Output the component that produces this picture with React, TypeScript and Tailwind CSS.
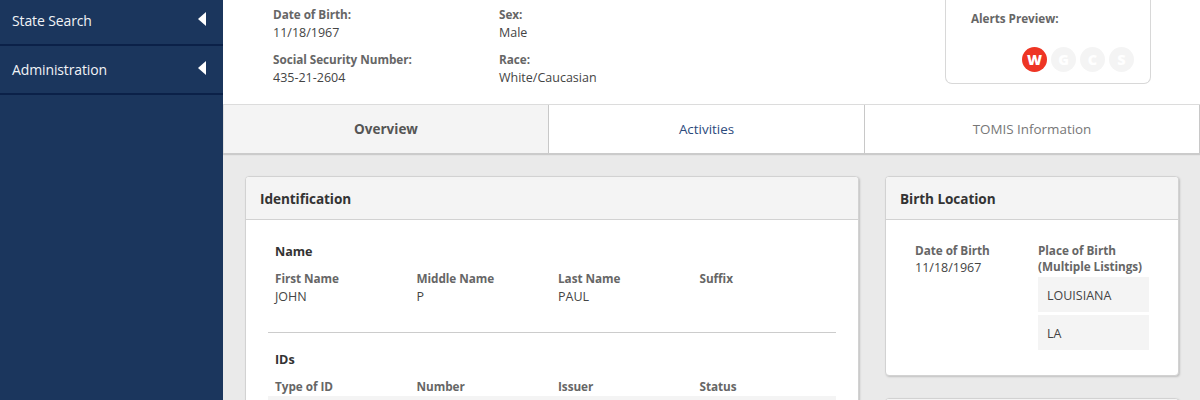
import type { ReactNode } from "react";

function NavItem({ label }: { label: string }) {
  return (
    <div className="flex h-[49px] items-center justify-between border-b-2 border-[#0b2148] pr-[17px] pl-3 text-[14px] leading-5 tracking-[-0.12px] text-[#f1f3f6]">
      <span className="pt-px">{label}</span>
      <svg className="mb-[3px] h-[14px] w-[8px]" viewBox="0 0 8 14" fill="#fff">
        <path d="M8 0v14L0 7z" />
      </svg>
    </div>
  );
}

function Field({ label, value }: { label: string; value?: string }) {
  return (
    <div className="leading-[17px] whitespace-nowrap">
      <div className="text-[11.75px] font-bold tracking-[-0.05px] text-[#666]">{label}</div>
      <div className="pt-px text-[12.5px] leading-[17px] text-[#444]">{value}</div>
    </div>
  );
}

function Alert({ letter, active = false }: { letter: string; active?: boolean }) {
  return (
    <span
      className={
        active
          ? "flex size-[25px] items-center justify-center rounded-full bg-[#ee3524] pt-px text-[14.5px] leading-none font-extrabold text-white"
          : "flex size-[25px] items-center justify-center rounded-full bg-[#f4f4f4] pt-px text-[14.5px] leading-none font-extrabold text-white"
      }
    >
      {letter}
    </span>
  );
}

function Card({ title, children }: { title: string; children?: ReactNode }) {
  return (
    <section className="rounded-[4px] border border-[#d2d2d2] bg-white shadow-[1px_1px_2px_#c0c0c0]">
      <h2 className="flex h-[43px] items-center rounded-t-[3px] border-b border-[#d2d2d2] bg-[#f4f4f4] pt-px pl-[14px] text-[13.6px] leading-[18px] font-bold tracking-[-0.07px] text-[#333]">
        {title}
      </h2>
      {children}
    </section>
  );
}

export default function App() {
  return (
    <div className="flex h-[400px] w-[1200px] overflow-hidden bg-[#eaeaea] font-['Open_Sans',sans-serif]">
      <nav className="z-10 w-[223px] shrink-0 bg-[#1b365d]">
        <div className="-mt-[3px]">
          <NavItem label="State Search" />
          <NavItem label="Administration" />
        </div>
      </nav>

      <main className="flex min-w-0 flex-1 flex-col">
        <header className="flex h-[104px] shrink-0 justify-between bg-white pr-[49px] pl-[50px]">
          <div className="grid grid-cols-[226px_200px] content-start gap-y-[10px] pt-[6px]">
            <Field label="Date of Birth:" value="11/18/1967" />
            <Field label="Sex:" value="Male" />
            <Field label="Social Security Number:" value="435-21-2604" />
            <Field label="Race:" value="White/Caucasian" />
          </div>
          <div className="h-[84px] w-[206px] rounded-b-[7px] border border-t-0 border-[#d8d8d8] pt-[9px] pl-[25px]">
            <div className="text-[11.75px] leading-[18px] font-bold tracking-[-0.05px] text-[#666]">Alerts Preview:</div>
            <div className="mt-5 flex gap-[4px] pl-[51px]">
              <Alert letter="W" active />
              <Alert letter="G" />
              <Alert letter="C" />
              <Alert letter="S" />
            </div>
          </div>
        </header>

        <div className="relative grid h-[49px] shrink-0 grid-cols-[326px_316px_335px] border-t border-[#dcdcdc] bg-white text-[13.4px] leading-[18px] shadow-[0_2px_1px_#cbcbcb]">
          <div className="flex items-center justify-center border-r border-l border-[#c8c8c8] border-l-[#e0e0e0] bg-[#f4f4f4] text-[13.5px] font-bold text-[#555]">
            Overview
          </div>
          <div className="flex items-center justify-center border-r border-[#c8c8c8] text-[#2c4a7c]">
            Activities
          </div>
          <div className="flex items-center justify-center border-r border-[#c8c8c8] text-[#777]">
            TOMIS Information
          </div>
        </div>

        <div className="grid grid-cols-[614px_294px] items-start gap-[26px] pt-[23px] pl-[22px]">
          <Card title="Identification">
            <div className="px-[22px] pt-[23px]">
              <h3 className="pl-[7px] text-[12.6px] leading-[18px] font-bold tracking-[-0.05px] text-[#333]">Name</h3>
              <div className="mt-[9px] grid h-[63px] grid-cols-[141.5px_141.5px_141.5px_120px] border-b border-[#ccc] pl-[7px]">
                <Field label="First Name" value="JOHN" />
                <Field label="Middle Name" value="P" />
                <Field label="Last Name" value="PAUL" />
                <Field label="Suffix" />
              </div>
              <h3 className="mt-[18px] pl-[7px] text-[12.6px] leading-[18px] font-bold tracking-[-0.05px] text-[#333]">IDs</h3>
              <div className="mt-[9px] grid h-[18px] grid-cols-[141.5px_141.5px_141.5px_120px] pl-[7px]">
                <Field label="Type of ID" />
                <Field label="Number" />
                <Field label="Issuer" />
                <Field label="Status" />
              </div>
              <div className="relative h-[36px] bg-[#f4f4f4]" />
            </div>
          </Card>

          <div className="flex flex-col gap-[22px]">
            <Card title="Birth Location">
              <div className="flex h-[155px] pt-[22px] pl-[29px]">
                <div className="w-[123px]">
                  <div className="text-[11.75px] leading-[17px] font-bold tracking-[-0.05px] text-[#666]">Date of Birth</div>
                  <div className="text-[12.5px] leading-[17px] text-[#444]">11/18/1967</div>
                </div>
                <div className="w-[111px]">
                  <div className="text-[11.75px] leading-[16px] font-bold tracking-[-0.05px] whitespace-nowrap text-[#666]">
                    Place of Birth
                    <br />
                    (Multiple Listings)
                  </div>
                  <ul className="mt-[3px] space-y-[3px] text-[12.5px] leading-[17px] text-[#444]">
                    <li className="flex h-[35px] items-center bg-[#f4f4f4] pt-[2px] pl-[9px]">LOUISIANA</li>
                    <li className="flex h-[35px] items-center bg-[#f4f4f4] pt-[2px] pl-[9px]">LA</li>
                  </ul>
                </div>
              </div>
            </Card>
            <Card title="" />
          </div>
        </div>
      </main>
    </div>
  );
}
